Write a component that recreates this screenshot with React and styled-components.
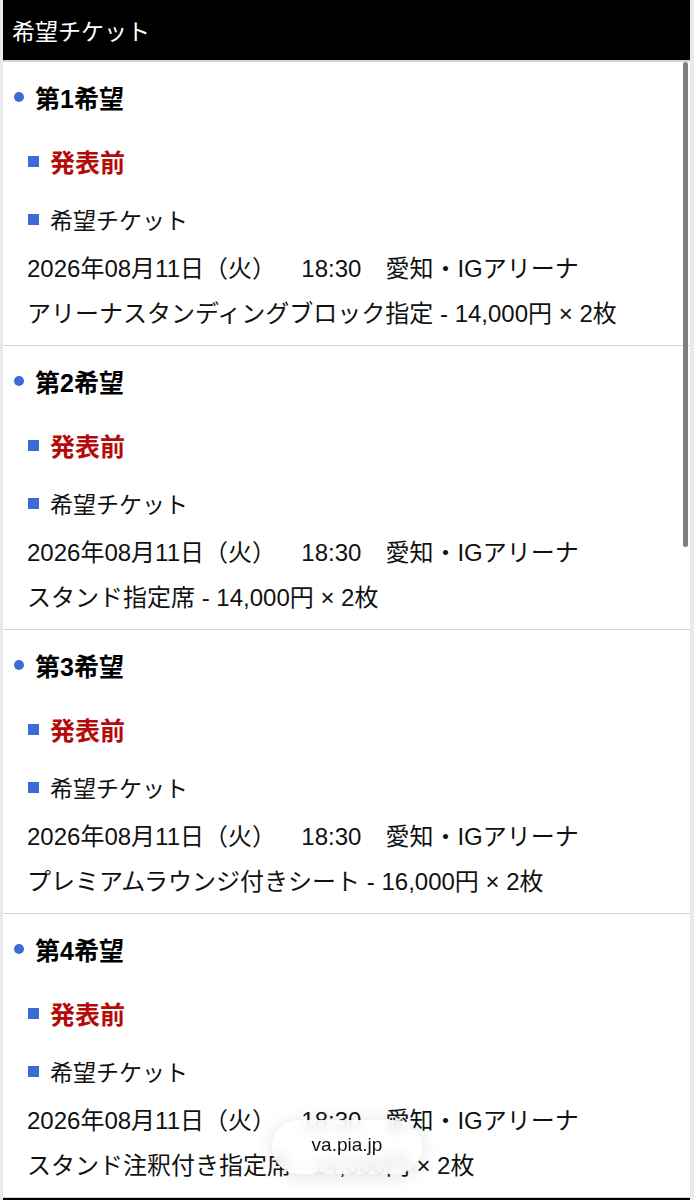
import styled, { createGlobalStyle } from "styled-components";

const GlobalStyle = createGlobalStyle`
  body {
    margin: 0;
    background: #ffffff;
    font-family: "Liberation Sans", "Noto Sans CJK JP", sans-serif;
    color: #111111;
  }
`;

const wishes = [
  { no: 1, seat: "アリーナスタンディングブロック指定 - 14,000円 × 2枚" },
  { no: 2, seat: "スタンド指定席 - 14,000円 × 2枚" },
  { no: 3, seat: "プレミアムラウンジ付きシート - 16,000円 × 2枚" },
  { no: 4, seat: "スタンド注釈付き指定席 - 14,000円 × 2枚" },
];

function Wish({ no, seat }) {
  return (
    <Section>
      <Title>
        <Dot />
        第{no}希望
      </Title>
      <Item $status>
        <Square />
        発表前
      </Item>
      <Item>
        <Square />
        希望チケット
      </Item>
      <Detail $first>{"2026年08月11日（火）　  18:30　愛知・IGアリーナ"}</Detail>
      <Detail>{seat}</Detail>
    </Section>
  );
}

export default function App() {
  return (
    <>
      <GlobalStyle />
      <Frame>
        <Header>希望チケット</Header>
        {wishes.map((w) => (
          <Wish key={w.no} {...w} />
        ))}
        <Header />
        <Thumb />
      </Frame>
      <UrlPill>va.pia.jp</UrlPill>
    </>
  );
}

const Frame = styled.div`
  position: relative;
  width: 694px;
  box-sizing: border-box;
  border-left: 3px solid #e9e9e9;
  border-right: 4px solid #e9e9e9;
  background: #ffffff;
`;

const Header = styled.div`
  display: flex;
  align-items: center;
  height: 60px;
  padding-left: 9px;
  background: #000000;
  color: #ffffff;
  font-size: 23px;
  border-bottom: 2px solid #d4d4d4;
`;

const Section = styled.div`
  padding-bottom: 9px;
  border-bottom: 1px solid #d2d2d2;
`;

const Title = styled.h2`
  display: flex;
  align-items: center;
  gap: 11px;
  height: 36px;
  margin: 17px 0 0;
  padding-left: 11px;
  font-size: 25px;
  font-weight: 700;
  color: #000000;
`;

const Dot = styled.span`
  width: 10px;
  height: 10px;
  border-radius: 50%;
  background: #3a6bd6;
`;

const Item = styled.div`
  display: flex;
  align-items: center;
  gap: 11px;
  height: 36px;
  margin-top: ${(p) => (p.$status ? "28px" : "22px")};
  padding-left: 25px;
  font-size: ${(p) => (p.$status ? "25px" : "23px")};
  font-weight: ${(p) => (p.$status ? 700 : 400)};
  color: ${(p) => (p.$status ? "#b40a0a" : "#111111")};
`;

const Square = styled.span`
  width: 11px;
  height: 11px;
  background: #3a6bd6;
`;

const Detail = styled.div`
  margin-top: ${(p) => (p.$first ? "9px" : "0")};
  padding-left: 24px;
  font-size: 24px;
  line-height: 45px;
  white-space: pre;
`;

const Thumb = styled.div`
  position: absolute;
  top: 62px;
  right: 2px;
  width: 5px;
  height: 485px;
  border-radius: 3px;
  background: #7e7e7e;
`;

const UrlPill = styled.div`
  position: fixed;
  left: 50%;
  top: 1120px;
  transform: translateX(-50%);
  display: flex;
  align-items: center;
  justify-content: center;
  width: 150px;
  height: 54px;
  padding-bottom: 4px;
  box-sizing: border-box;
  border-radius: 27px;
  background: rgba(255, 255, 255, 0.85);
  backdrop-filter: blur(6px);
  box-shadow: 0 2px 18px rgba(0, 0, 0, 0.12);
  font-size: 19px;
  color: #111111;
`;
